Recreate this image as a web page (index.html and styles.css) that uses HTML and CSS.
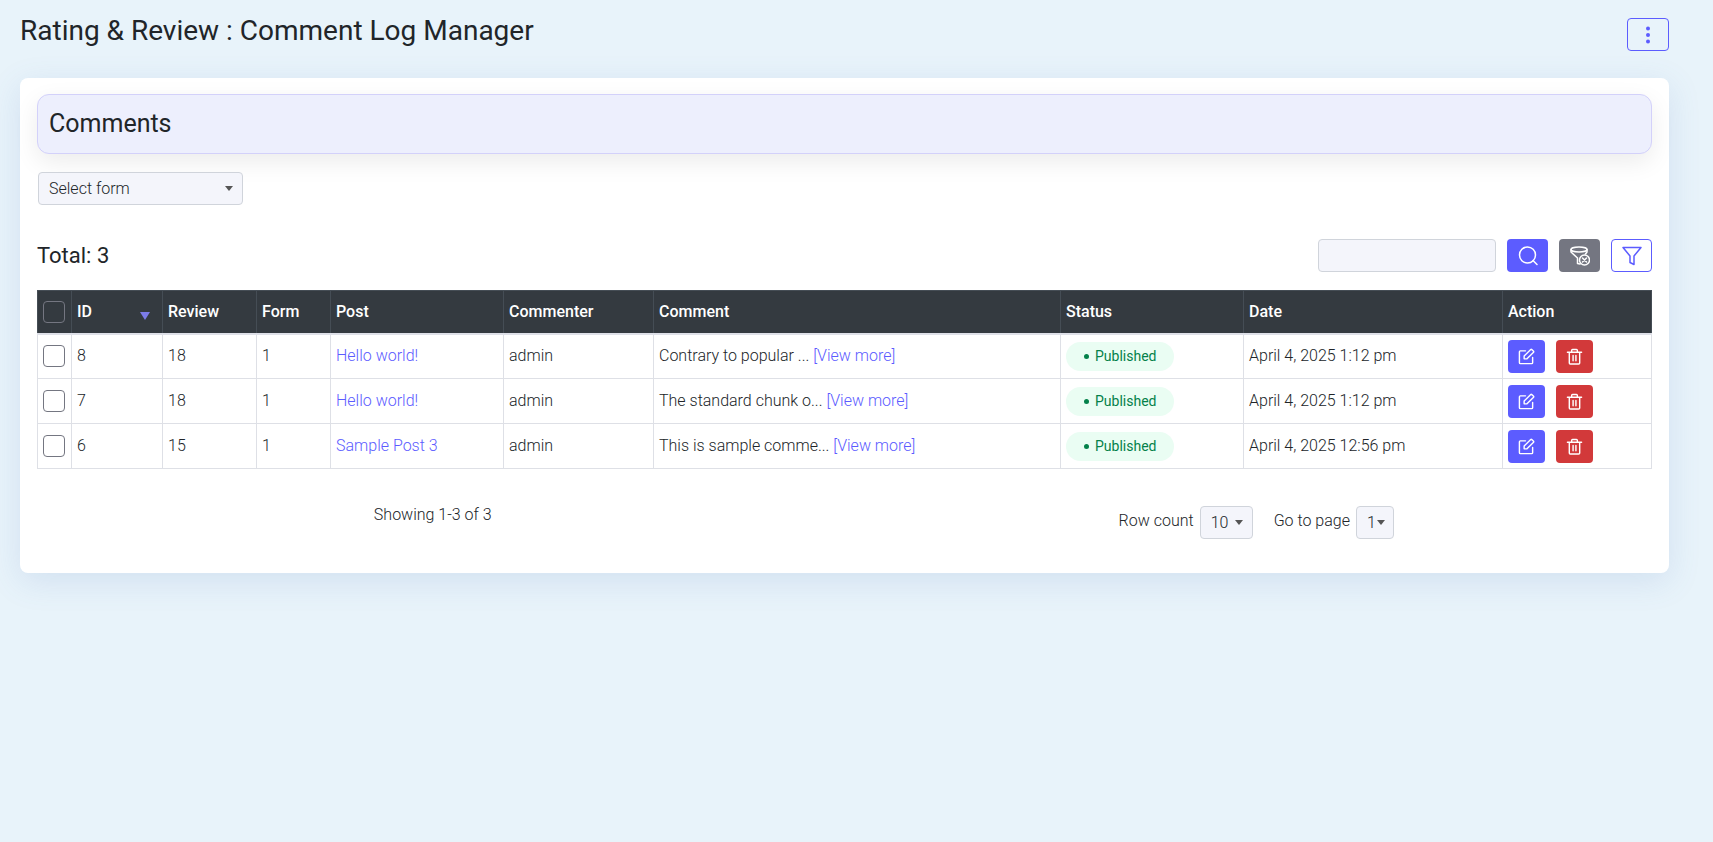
FILE: index.html
```html
<!DOCTYPE html>
<html lang="en">
<head>
    <meta charset="UTF-8">
    <title>Comment Log Manager</title>
    <link rel="stylesheet" href="styles.css">
</head>

<body>
    <!-- icons shared by the buttons -->
    <svg class="icon-defs" width="0" height="0">
        <symbol id="icon-edit" viewBox="0 0 18 18">
            <path d="M8 3H2.500a1 1 0 0 0-1 1v11.500a1 1 0 0 0 1 1H14.500a1 1 0 0 0 1-1V10"/>
            <path d="M6.500 11.500V8.500L13.500 1.500a.7.700 0 0 1 1 0L16.500 3.500a.7.700 0 0 1 0 1L9.500 11.500z"/>
        </symbol>
        <symbol id="icon-trash" viewBox="0 0 18 18">
            <path d="M1.500 4.500H16.500M3.500 4.500V16a1 1 0 0 0 1 1H13.500a1 1 0 0 0 1-1V4.500M6 4.500V2.500a1 1 0 0 1 1-1H11a1 1 0 0 1 1 1V4.500M7.500 8V13.500M10.500 8V13.500"/>
        </symbol>
    </svg>

    <header class="page-header">
        <h1>Rating &amp; Review : Comment Log Manager</h1>
        <button type="button" class="btn btn-outline" aria-label="More options">
            <svg class="icon" viewBox="0 0 20 20"><g fill="currentColor" stroke="none"><circle cx="10" cy="3.500" r="2"/><circle cx="10" cy="10" r="2"/><circle cx="10" cy="16.500" r="2"/></g></svg>
        </button>
    </header>

    <main class="card">
        <h2 class="card-title">Comments</h2>

        <select class="field form-select" aria-label="Select form">
            <option>Select form</option>
        </select>

        <div class="toolbar">
            <h3>Total: 3</h3>
            <form class="search">
                <input type="text" class="field search-input" aria-label="Search comments">
                <button type="button" class="btn btn-primary" aria-label="Search">
                    <svg class="icon" viewBox="0 0 20 20"><circle cx="9.500" cy="9" r="8"/><path d="M15 14.500L19 18.500"/></svg>
                </button>
                <button type="button" class="btn btn-grey" aria-label="Clear filter">
                    <svg class="icon" viewBox="0 0 20 20"><ellipse cx="9" cy="3.500" rx="8" ry="2.500"/><path d="M1 3.500V6L7.500 12V17.500L10 18M17 3.500V6L15.500 8"/><circle cx="14.500" cy="14" r="5"/><path d="M12.500 12L16.500 16M16.500 12L12.500 16"/></svg>
                </button>
                <button type="button" class="btn btn-outline" aria-label="Filter">
                    <svg class="icon" viewBox="0 0 20 20"><path d="M1 1.500H19L12 10V18.500L8 16.500V10z"/></svg>
                </button>
            </form>
        </div>

        <table class="comments">
            <colgroup>
                <col class="col-check"><col class="col-id"><col class="col-review"><col class="col-form"><col class="col-post"><col class="col-commenter"><col><col class="col-status"><col class="col-date"><col class="col-action">
            </colgroup>
            <thead>
                <tr>
                    <th><input type="checkbox" class="check" aria-label="Select all"></th>
                    <th><div class="sort">ID <span class="sort-arrow"></span></div></th>
                    <th>Review</th>
                    <th>Form</th>
                    <th>Post</th>
                    <th>Commenter</th>
                    <th>Comment</th>
                    <th>Status</th>
                    <th>Date</th>
                    <th>Action</th>
                </tr>
            </thead>
            <tbody>
                <tr>
                    <td><input type="checkbox" class="check" aria-label="Select comment 8"></td>
                    <td>8</td>
                    <td>18</td>
                    <td>1</td>
                    <td><a href="#">Hello world!</a></td>
                    <td>admin</td>
                    <td>Contrary to popular ... <a href="#">[View more]</a></td>
                    <td><span class="badge">Published</span></td>
                    <td>April 4, 2025 1:12 pm</td>
                    <td>
                        <div class="actions">
                            <button type="button" class="btn btn-small btn-primary" aria-label="Edit"><svg class="icon"><use href="#icon-edit"/></svg></button>
                            <button type="button" class="btn btn-small btn-danger" aria-label="Delete"><svg class="icon"><use href="#icon-trash"/></svg></button>
                        </div>
                    </td>
                </tr>
                <tr>
                    <td><input type="checkbox" class="check" aria-label="Select comment 7"></td>
                    <td>7</td>
                    <td>18</td>
                    <td>1</td>
                    <td><a href="#">Hello world!</a></td>
                    <td>admin</td>
                    <td>The standard chunk o... <a href="#">[View more]</a></td>
                    <td><span class="badge">Published</span></td>
                    <td>April 4, 2025 1:12 pm</td>
                    <td>
                        <div class="actions">
                            <button type="button" class="btn btn-small btn-primary" aria-label="Edit"><svg class="icon"><use href="#icon-edit"/></svg></button>
                            <button type="button" class="btn btn-small btn-danger" aria-label="Delete"><svg class="icon"><use href="#icon-trash"/></svg></button>
                        </div>
                    </td>
                </tr>
                <tr>
                    <td><input type="checkbox" class="check" aria-label="Select comment 6"></td>
                    <td>6</td>
                    <td>15</td>
                    <td>1</td>
                    <td><a href="#">Sample Post 3</a></td>
                    <td>admin</td>
                    <td>This is sample comme... <a href="#">[View more]</a></td>
                    <td><span class="badge">Published</span></td>
                    <td>April 4, 2025 12:56 pm</td>
                    <td>
                        <div class="actions">
                            <button type="button" class="btn btn-small btn-primary" aria-label="Edit"><svg class="icon"><use href="#icon-edit"/></svg></button>
                            <button type="button" class="btn btn-small btn-danger" aria-label="Delete"><svg class="icon"><use href="#icon-trash"/></svg></button>
                        </div>
                    </td>
                </tr>
            </tbody>
        </table>

        <div class="pager">
            <p class="showing">Showing 1-3 of 3</p>
            <div class="pager-controls">
                <div class="pager-group">
                    <label for="rowCount">Row count</label>
                    <select id="rowCount" class="field row-count">
                        <option>10</option>
                    </select>
                </div>
                <div class="pager-group">
                    <label for="goToPage">Go to page</label>
                    <select id="goToPage" class="field page-number">
                        <option>1</option>
                    </select>
                </div>
            </div>
        </div>
    </main>
</body>
</html>
```
FILE: styles.css
```css
* {box-sizing: border-box;}

body {
    margin: 0;
    min-height: 100vh;
    padding: 18px 44px 18px 20px;
    background: #E8F3FA;
    color: #212529;
    font-family: Roboto, "Liberation Sans", sans-serif;
    font-size: 16px;
    font-weight: 300;
    line-height: 24px;
}

h1, h2, h3 {margin: 0;font-weight: 400;}

p {margin: 0;}

a {color: #5C5CFF;text-decoration: none;}

button, input, select {font: inherit;color: inherit;}

.icon-defs {display: none;}

.icon {
    width: 20px;
    height: 20px;
    fill: none;
    stroke: currentColor;
    stroke-width: 1.5;
    stroke-linejoin: round;
    stroke-linecap: round;
}

/* header */
.page-header {
    display: flex;
    justify-content: space-between;
    align-items: flex-start;
    min-height: 60px;
}

.page-header h1 {font-size: 28px;line-height: 26px;}

/* buttons */
.btn {
    display: flex;
    align-items: center;
    justify-content: center;
    width: 42px;
    height: 33px;
    padding: 0;
    border: 1px solid transparent;
    border-radius: 4px;
    color: #FFF;
    cursor: pointer;
}

.btn-small {width: 37px;}
.btn-small .icon {width: 17px;height: 17px;}
.btn-primary {background: #5C5CFF;}
.btn-grey {background: #747681;}
.btn-danger {background: #D2393A;}
.btn-outline {background: transparent;border-color: #5C5CFF;color: #5C5CFF;}

/* card */
.card {
    padding: 16px 17px 34px;
    border-radius: 8px;
    background: #FFF;
    box-shadow: 0 8px 32px rgba(80, 120, 190, 0.15);
}

.card-title {
    padding: 14px 11px;
    border: 1px solid #D3D1FA;
    border-radius: 12px;
    background: #EDEFFD;
    box-shadow: 0 8px 24px rgba(0, 0, 0, 0.08);
    font-size: 25px;
    line-height: 30px;
}

.field {
    height: 33px;
    border: 1px solid #D0D4DB;
    border-radius: 4px;
    background-color: #F4F5FB;
}

select.field {
    padding: 0 10px;
    appearance: none;
    background-image: url("data:image/svg+xml,%3Csvg xmlns='http://www.w3.org/2000/svg' width='8' height='5'%3E%3Cpath d='M0 0h8L4 5z' fill='%23555'/%3E%3C/svg%3E");
    background-repeat: no-repeat;
    background-position: right 9px center;
}

.form-select {display: block;width: 205px;margin: 18px 1px 34px;}

.toolbar {
    display: flex;
    justify-content: space-between;
    align-items: center;
    margin-bottom: 18px;
}

.toolbar h3 {font-size: 22px;}

.search {display: flex;gap: 11px;}

.search .btn {width: 41px;}

.search-input {width: 178px;}

/* table */
.comments {
    width: 100%;
    table-layout: fixed;
    border-collapse: collapse;
}

.col-check {width: 34px;}
.col-id {width: 91px;}
.col-review {width: 94px;}
.col-form {width: 74px;}
.col-post {width: 173px;}
.col-commenter {width: 150px;}
.col-status {width: 183px;}
.col-date {width: 259px;}
.col-action {width: 149px;}

.comments th {
    height: 43px;
    padding: 0 5px;
    border: 1px solid #454D55;
    border-bottom: 2px solid #DEE0E8;
    background: #343A40;
    color: #FFF;
    font-weight: 500;
    text-align: left;
}

.comments td {
    height: 45px;
    padding: 0 5px;
    border: 1px solid #DEE0E6;
}

.check {
    display: block;
    width: 22px;
    height: 22px;
    margin: 0;
    appearance: none;
    border: 1px solid #747681;
    border-radius: 4px;
}

.sort {
    display: flex;
    justify-content: space-between;
    align-items: center;
    padding-right: 7px;
}

.sort-arrow {
    margin-top: 8px;
    border: 5px solid transparent;
    border-top: 8px solid #7C7CE8;
    border-bottom: 0;
}

.badge {
    display: inline-flex;
    align-items: center;
    gap: 6px;
    height: 29px;
    padding: 0 18px;
    border-radius: 15px;
    background: #EAFDF3;
    color: #04814A;
    font-size: 14px;
    font-weight: 400;
    vertical-align: middle;
}

.badge::before {
    content: "";
    width: 5px;
    height: 5px;
    border-radius: 50%;
    background: #04814A;
}

.actions {display: flex;gap: 11px;}

/* pager */
.pager {
    display: grid;
    grid-template-columns: 1fr 1fr;
    gap: 32px;
    margin-top: 37px;
    text-align: center;
}

.showing {line-height: 18px;}

.pager-controls {display: flex;justify-content: center;gap: 21px;}

.pager-group {display: flex;gap: 6px;}

.pager-group label {line-height: 30px;}

.row-count {width: 53px;}

select.page-number {width: 38px;background-position: right 8px center;}
```
